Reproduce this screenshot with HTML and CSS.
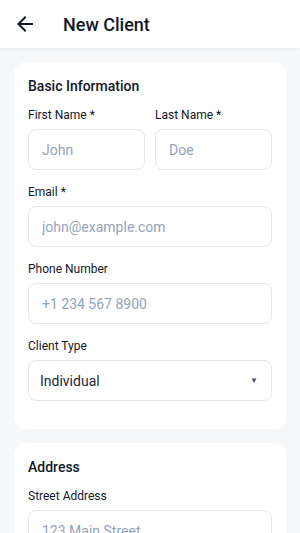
FILE: index.html
```html
<!DOCTYPE html>
<html lang="en">

<head>
    <meta charset="UTF-8">
    <meta name="viewport" content="width=device-width, initial-scale=1.0">
    <title>New Client</title>
    <link rel="stylesheet" href="styles.css">
</head>

<body>
    <header class="top-bar">
        <button class="back-button" aria-label="Back">
            <svg width="24" height="24" viewBox="0 0 24 24">
                <path d="M20 11H7.83l5.59-5.59L12 4l-8 8 8 8 1.41-1.41L7.83 13H20v-2z" fill="#111827"/>
            </svg>
        </button>
        <h1 class="page-title">New Client</h1>
    </header>

    <main class="content">
        <section class="card">
            <h2 class="card-title">Basic Information</h2>

            <div class="field-row">
                <div class="field">
                    <label>First Name *</label>
                    <input type="text" placeholder="John">
                </div>
                <div class="field">
                    <label>Last Name *</label>
                    <input type="text" placeholder="Doe">
                </div>
            </div>

            <div class="field">
                <label>Email *</label>
                <input type="email" placeholder="john@example.com">
            </div>

            <div class="field">
                <label>Phone Number</label>
                <input type="tel" placeholder="+1 234 567 8900">
            </div>

            <div class="field">
                <label>Client Type</label>
                <div class="select-box">
                    <span>Individual</span>
                    <span class="select-arrow">▼</span>
                </div>
            </div>
        </section>

        <section class="card">
            <h2 class="card-title">Address</h2>

            <div class="field">
                <label>Street Address</label>
                <input type="text" placeholder="123 Main Street">
            </div>
        </section>
    </main>
</body>

</html>
```

FILE: styles.css
```css
body {
    font-family: Roboto, "Noto Sans", Arial, sans-serif;
    background: #f7f8fa;
    color: #111827;
    margin: 0;
    overflow: hidden;
}

.top-bar {
    height: 48px;
    background: white;
    display: flex;
    align-items: center;
    padding: 0 13px;
    box-shadow: 0 1px 4px rgba(0, 0, 0, 0.07);
}

.back-button {
    border: none;
    background: none;
    padding: 0;
    width: 24px;
    height: 24px;
    cursor: pointer;
}

.page-title {
    margin: 0 0 0 26px;
    font-size: 18px;
    font-weight: 500;
    color: #111827;
}

.content {
    padding: 14px;
    display: flex;
    flex-direction: column;
    gap: 14px;
}

.card {
    background: white;
    border-radius: 12px;
    padding: 14px;
}

.card-title {
    margin: 0 0 11px;
    font-size: 14px;
    line-height: 20px;
    font-weight: 500;
}

.field-row {
    display: flex;
    gap: 10px;
}

.field-row .field {
    flex: 1;
    min-width: 0;
}

.field {
    display: flex;
    flex-direction: column;
    margin-bottom: 14px;
}

.field label {
    font-size: 12px;
    line-height: 16px;
    margin-bottom: 6px;
    color: #111827;
}

.field input,
.select-box {
    box-sizing: border-box;
    height: 41px;
    border: 1px solid #e2e8f0;
    border-radius: 8px;
    font-family: inherit;
    font-size: 14px;
    padding: 0 13px;
    color: #1e293b;
    background: white;
    width: 100%;
}

.field input::placeholder {
    color: #94a3b8;
}

.select-box {
    display: flex;
    align-items: center;
    justify-content: space-between;
    padding: 0 11px;
}

.select-arrow {
    font-size: 8px;
    color: #475569;
    margin-right: 2px;
}
```
